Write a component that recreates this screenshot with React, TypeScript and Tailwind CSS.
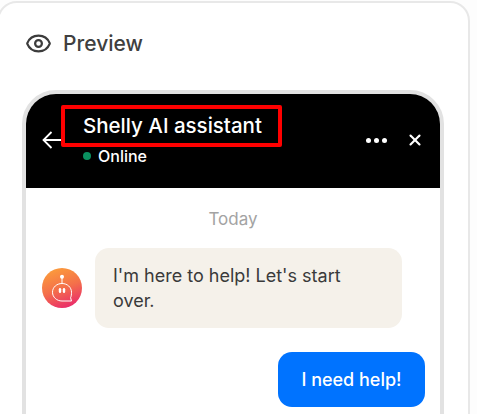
import React from 'react';
import { Eye, X } from 'lucide-react';

const BotAvatar = () => (
  <div className="w-10 h-10 shrink-0 rounded-full bg-[linear-gradient(160deg,#fb9a3c_10%,#f4704a_50%,#e8246f_95%)] flex items-center justify-center">
    <svg width="40" height="40" viewBox="0 0 40 40" fill="none">
      <circle cx="20" cy="8.7" r="2" fill="#fff" />
      <path d="M20 10V15" stroke="#fff" strokeWidth="1" />
      <path
        d="M20 15.5C14.8 15.5 10.5 19.2 10.5 24.2C10.5 29.2 14.8 33 20 33H29.5L28.6 29.7C29.3 28.4 29.5 26.2 29.5 24.2C29.5 19.2 25.2 15.5 20 15.5Z"
        stroke="#fff"
        strokeWidth="1"
      />
      <rect x="16.8" y="20" width="2.4" height="5" rx="1.2" fill="#fff" />
      <rect x="20.8" y="20" width="2.4" height="5" rx="1.2" fill="#fff" />
    </svg>
  </div>
);

export default function App() {
  return (
    <div className="w-[477px] h-[414px] overflow-hidden bg-[#fdfdfd] font-['Inter',sans-serif]">
      <div className="-ml-[3px] mt-[1px] w-[473px] h-[440px] bg-white border-2 border-[#e8e8e8] rounded-[20px] pl-[23px] pr-[25px]">
        {/* Title */}
        <div className="flex items-center gap-[11px] h-[80px] pl-[3px]">
          <Eye size={27} strokeWidth={2} className="text-[#3c3c3c]" />
          <span className="text-[21px] font-medium text-[#404040] leading-none">Preview</span>
        </div>

        {/* Phone frame */}
        <div className="relative mt-[7px] w-[422px] h-[360px] border-4 border-[#e2e2e2] rounded-[34px] overflow-hidden bg-white">
          <div className="h-[94px] bg-black text-white flex items-center pl-[16px] pr-[16px]">
            <svg width="20" height="18" viewBox="0 0 20 18" fill="none" className="mb-[2px] shrink-0">
              <path d="M20 9H1.5M9.5 1L1.5 9L9.5 17" stroke="#fff" strokeWidth="1.8" />
            </svg>
            <div className="ml-[21px] flex-1 flex flex-col gap-[8px] mb-[2px]">
              <span className="text-[20.5px] font-medium leading-[24px]">Shelly AI assistant</span>
              <div className="flex items-center gap-[7px] leading-[20px]">
                <span className="w-2 h-2 rounded-full bg-[#0a8f5f]" />
                <span className="text-[16px] font-medium">Online</span>
              </div>
            </div>
            <div className="flex items-center gap-[3px] mb-[2px]">
              <span className="w-[5px] h-[5px] rounded-full bg-white" />
              <span className="w-[5px] h-[5px] rounded-full bg-white" />
              <span className="w-[5px] h-[5px] rounded-full bg-white" />
            </div>
            <X size={18} strokeWidth={2.8} className="ml-[19px] mb-[2px]" />
          </div>

          <div className="px-[16px]">
            <p className="mt-[21px] text-center text-[17px] leading-[20px] text-[#a3a3a3]">Today</p>
            <div className="mt-[19px] flex items-center gap-[13px]">
              <BotAvatar />
              <div className="w-[307px] h-[80px] rounded-[14px] bg-[#f5f1ea] px-[18px] py-[15px] text-[18px] leading-[25px] text-[#3a3a3a]">
                I'm here to help! Let's start over.
              </div>
            </div>
            <div className="mt-[24px] flex justify-end -mr-[1px]">
              <div className="w-[147px] h-[55px] rounded-[14px] bg-[#0073ff] flex items-center justify-center text-[18px] font-medium text-white">
                I need help!
              </div>
            </div>
          </div>

          {/* Highlight box */}
          <div className="absolute left-[35px] top-[11px] w-[221px] h-[42px] border-4 border-[#ff0000] rounded-[2px]" />
        </div>
      </div>
    </div>
  );
}
